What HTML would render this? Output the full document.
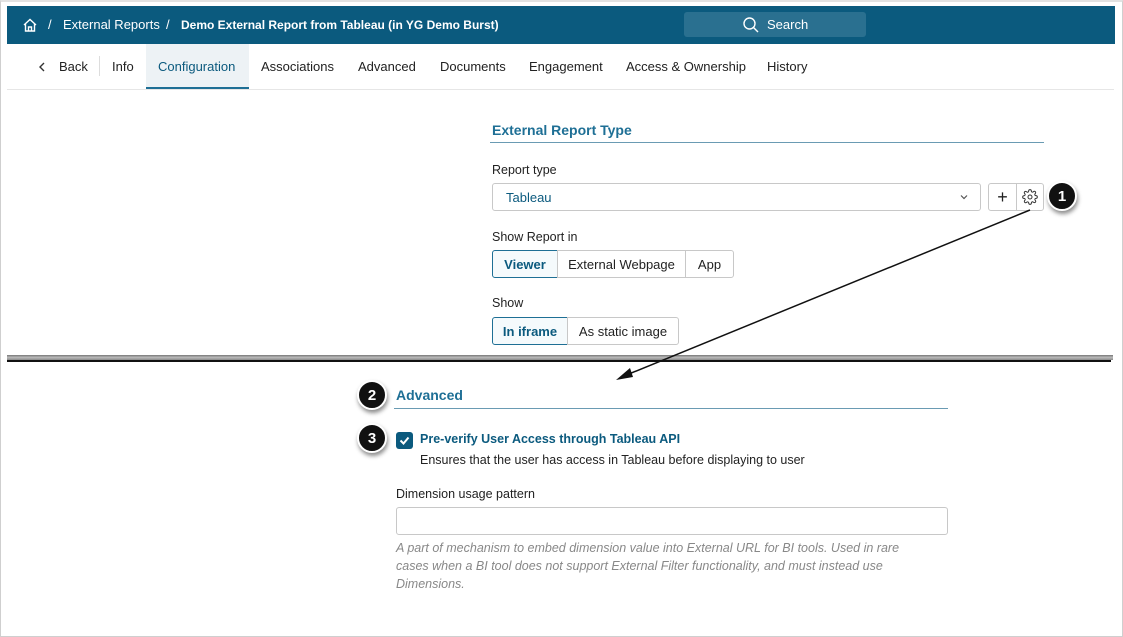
<!DOCTYPE html>
<html><head><meta charset="utf-8"><style>
*{box-sizing:border-box;margin:0;padding:0}
body{width:1123px;height:637px;background:#fff;font-family:"Liberation Sans",sans-serif;position:relative;overflow:hidden;color:#222}
.a{position:absolute}
.frame{left:0;top:0;width:1123px;height:637px;border:1px solid #cfcfcf;border-top:2px solid #e2e2e2}
.hdr{left:7px;top:6px;width:1108px;height:38px;background:#0b5a7e;color:#fff;font-size:13px}
.tab{top:59px;font-size:13px;color:#222}
.btn{border:1px solid #c8c8c8;height:28px;font-size:13px;display:flex;align-items:center;justify-content:center;background:#fff}
.sel{border-color:#1e6f95;color:#0b5a7e;font-weight:bold;background:#f5fafc}
.lbl{font-size:12.5px;color:#222}
.badge{width:30px;height:30px;border-radius:50%;background:#111;color:#fff;font-weight:bold;font-size:15px;display:flex;align-items:center;justify-content:center;box-shadow:1px 3px 4px rgba(0,0,0,.45);border:2px solid #fff}
</style></head><body>
<div class="a frame"></div>
<div class="a hdr">
  <svg class="a" style="left:15px;top:11px" width="16" height="16" viewBox="0 0 16 16" fill="none" stroke="#fff" stroke-width="1.4"><path d="M2 8 L8 2.5 L14 8 M3.5 6.8 V14 H12.5 V6.8 M6.5 14 V10 H9.5 V14"/></svg>
  <div class="a" style="left:41px;top:11px">/</div>
  <div class="a" style="left:56px;top:11px">External Reports</div>
  <div class="a" style="left:159px;top:11px">/</div>
  <div class="a" style="left:174px;top:11px;font-weight:bold;font-size:12px;top:12px">Demo External Report from Tableau (in YG Demo Burst)</div>
  <div class="a" style="left:677px;top:6px;width:182px;height:25px;background:#2a7090;border-radius:3px"></div>
  <svg class="a" style="left:735px;top:10px" width="18" height="18" viewBox="0 0 18 18" fill="none" stroke="#fff" stroke-width="1.4"><circle cx="7.5" cy="7.5" r="5.5"/><path d="M11.5 11.5 L16 16"/></svg>
  <div class="a" style="left:760px;top:11px">Search</div>
</div>
<div class="a" style="left:146px;top:44px;width:103px;height:45px;background:#edf2f5;border-bottom:2px solid #1e6f95"></div>
<div class="a" style="left:7px;top:89px;width:1107px;height:1px;background:#e6e6e6"></div>
<svg class="a" style="left:37px;top:61px" width="10" height="12" viewBox="0 0 10 12" fill="none" stroke="#333" stroke-width="1.4"><path d="M7 2 L3 6 L7 10"/></svg>
<div class="a tab" style="left:59px">Back</div>
<div class="a" style="left:99px;top:56px;width:1px;height:20px;background:#ddd"></div>
<div class="a tab" style="left:112px">Info</div>
<div class="a tab" style="left:158px;color:#0b5a7e">Configuration</div>
<div class="a tab" style="left:261px">Associations</div>
<div class="a tab" style="left:358px">Advanced</div>
<div class="a tab" style="left:440px">Documents</div>
<div class="a tab" style="left:529px">Engagement</div>
<div class="a tab" style="left:626px">Access &amp; Ownership</div>
<div class="a tab" style="left:767px">History</div>

<div class="a" style="left:492px;top:122px;font-size:14px;font-weight:bold;color:#1e6f95">External Report Type</div>
<div class="a" style="left:490px;top:142px;width:554px;height:1px;background:#6a9bb3"></div>
<div class="a lbl" style="left:492px;top:163px">Report type</div>
<div class="a btn" style="left:492px;top:183px;width:489px;justify-content:flex-start;padding-left:13px;color:#0b5a7e;border-radius:3px">Tableau</div>
<svg class="a" style="left:959px;top:192px" width="10" height="10" viewBox="0 0 10 10" fill="none" stroke="#555" stroke-width="1.2"><path d="M2 3.5 L5 6.5 L8 3.5"/></svg>
<div class="a btn" style="left:988px;top:183px;width:29px;border-radius:3px 0 0 3px;font-size:18px">+</div>
<div class="a btn" style="left:1016px;top:183px;width:28px;border-radius:0 3px 3px 0">
<svg width="16" height="16" viewBox="0 0 24 24" fill="none" stroke="#333" stroke-width="1.5"><circle cx="12" cy="12" r="3"/><path d="M19.4 15a1.7 1.7 0 0 0 .3 1.8l.1.1a2 2 0 1 1-2.8 2.8l-.1-.1a1.7 1.7 0 0 0-1.8-.3 1.7 1.7 0 0 0-1 1.5V21a2 2 0 1 1-4 0v-.1a1.7 1.7 0 0 0-1.1-1.5 1.7 1.7 0 0 0-1.8.3l-.1.1a2 2 0 1 1-2.8-2.8l.1-.1a1.7 1.7 0 0 0 .3-1.800 1.7 1.7 0 0 0-1.5-1H3a2 2 0 1 1 0-4h.1a1.7 1.7 0 0 0 1.5-1.1 1.7 1.7 0 0 0-.3-1.8l-.1-.1a2 2 0 1 1 2.8-2.8l.1.1a1.7 1.7 0 0 0 1.8.3H9a1.7 1.7 0 0 0 1-1.5V3a2 2 0 1 1 4 0v.1a1.7 1.7 0 0 0 1 1.5 1.7 1.7 0 0 0 1.8-.3l.1-.1a2 2 0 1 1 2.8 2.8l-.1.1a1.7 1.7 0 0 0-.3 1.8V9a1.7 1.7 0 0 0 1.5 1H21a2 2 0 1 1 0 4h-.1a1.7 1.7 0 0 0-1.5 1z"/></svg></div>
<div class="a badge" style="left:1047px;top:181px">1</div>

<div class="a lbl" style="left:492px;top:230px">Show Report in</div>
<div class="a btn sel" style="left:492px;top:250px;width:66px;border-radius:3px 0 0 3px">Viewer</div>
<div class="a btn" style="left:557px;top:250px;width:129px">External Webpage</div>
<div class="a btn" style="left:685px;top:250px;width:49px;border-radius:0 3px 3px 0">App</div>
<div class="a lbl" style="left:492px;top:296px">Show</div>
<div class="a btn sel" style="left:492px;top:317px;width:76px;border-radius:3px 0 0 3px">In iframe</div>
<div class="a btn" style="left:567px;top:317px;width:112px;border-radius:0 3px 3px 0">As static image</div>

<div class="a" style="left:7px;top:355px;width:1106px;height:5px;background:linear-gradient(#777,#bbb,#888)"></div>
<div class="a" style="left:7px;top:360px;width:1104px;height:2px;background:#111"></div>
<svg class="a" style="left:0;top:0" width="1123" height="637"><line x1="1030" y1="210" x2="624" y2="376" stroke="#111" stroke-width="1.5"/><path d="M616 380 L630 368 L633 377 Z" fill="#111"/></svg>

<div class="a badge" style="left:357px;top:380px">2</div>
<div class="a" style="left:396px;top:387px;font-size:14px;font-weight:bold;color:#1e6f95">Advanced</div>
<div class="a" style="left:394px;top:408px;width:554px;height:1px;background:#6a9bb3"></div>
<div class="a badge" style="left:357px;top:423px">3</div>
<div class="a" style="left:396px;top:432px;width:17px;height:17px;background:#0b5a7e;border-radius:3px"></div>
<svg class="a" style="left:396px;top:432px" width="17" height="17" viewBox="0 0 17 17" fill="none" stroke="#fff" stroke-width="2"><path d="M4.5 8.5 L7.5 11.5 L12.5 5.5"/></svg>
<div class="a" style="left:420px;top:432px;font-size:12.5px;font-weight:bold;color:#0b5a7e">Pre-verify User Access through Tableau API</div>
<div class="a lbl" style="left:420px;top:453px">Ensures that the user has access in Tableau before displaying to user</div>
<div class="a lbl" style="left:396px;top:487px">Dimension usage pattern</div>
<div class="a" style="left:396px;top:507px;width:552px;height:28px;border:1px solid #c8c8c8;border-radius:3px"></div>
<div class="a" style="left:396px;top:539px;width:512px;font-size:12.5px;font-style:italic;color:#888;line-height:18px">A part of mechanism to embed dimension value into External URL for BI tools. Used in rare cases when a BI tool does not support External Filter functionality, and must instead use Dimensions.</div>
</body></html>
